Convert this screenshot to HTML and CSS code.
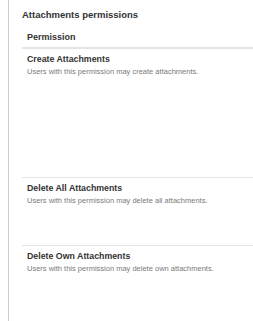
FILE: index.html
```html
<!DOCTYPE html>
<html lang="en">
<head>
    <meta charset="UTF-8">
    <title>Attachments permissions</title>
    <link rel="stylesheet" href="styles.css">
</head>
<body>
    <div class="panel">
        <h2 class="panel-title">Attachments permissions</h2>
        <table class="perm-table">
            <thead>
                <tr><th>Permission</th></tr>
            </thead>
            <tbody>
                <tr class="row-tall">
                    <td>
                        <div class="perm-name">Create Attachments</div>
                        <div class="perm-desc">Users with this permission may create attachments.</div>
                    </td>
                </tr>
                <tr class="row-mid">
                    <td>
                        <div class="perm-name">Delete All Attachments</div>
                        <div class="perm-desc">Users with this permission may delete all attachments.</div>
                    </td>
                </tr>
                <tr class="row-mid">
                    <td>
                        <div class="perm-name">Delete Own Attachments</div>
                        <div class="perm-desc">Users with this permission may delete own attachments.</div>
                    </td>
                </tr>
            </tbody>
        </table>
    </div>
</body>
</html>
```

FILE: styles.css
```css
body {
    margin: 0;
    font-family: "Liberation Sans", Arial, sans-serif;
    color: #333;
    background-color: #fff;
}

.panel {
    margin-left: 8px;
    border-left: 1px solid #ccc;
    min-height: 321px;
    padding: 9px 0 0 13px;
    box-sizing: border-box;
}

.panel-title {
    font-size: 9.5px;
    font-weight: bold;
    margin: 0 0 9px 0;
    color: #333;
}

.perm-table {
    width: 100%;
    border-collapse: collapse;
}

.perm-table th {
    text-align: left;
    font-size: 9px;
    font-weight: bold;
    padding: 3px 5px 5px 5px;
    border-bottom: 2px solid #e5e5e5;
}

.perm-table td {
    vertical-align: top;
    padding: 5px 5px 0 5px;
}

.row-tall td {
    height: 123px;
    border-bottom: 1px solid #e5e5e5;
}

.row-mid + .row-mid td {
    border-top: 1px solid #e5e5e5;
}

.row-mid td {
    height: 62px;
}

.perm-name {
    font-size: 8.8px;
    font-weight: bold;
    color: #333;
}

.perm-desc {
    font-size: 7.5px;
    color: #7a7a7a;
    margin-top: 3px;
}
```
